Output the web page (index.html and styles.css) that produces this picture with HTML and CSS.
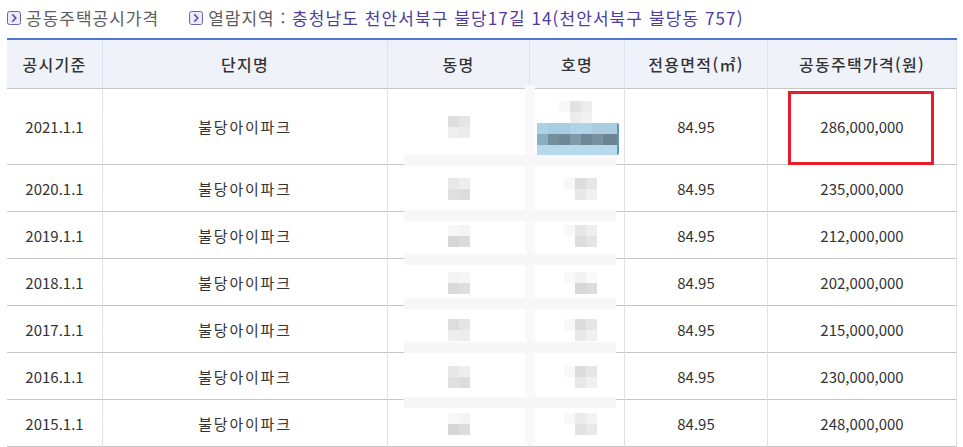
FILE: index.html
```html
<!DOCTYPE html>
<html lang="ko">
<head>
<meta charset="utf-8">
<link rel="stylesheet" href="styles.css">
</head>
<body>
<div class="title">
  <span class="item">
    <svg class="ico" width="14" height="14" viewBox="0 0 14 14"><rect x="0.5" y="0.5" width="13" height="13" rx="2" fill="#ecebf7" stroke="#6a64ad"/><path d="M5.3 3.4 L8.8 7 L5.3 10.6" fill="none" stroke="#5b53a6" stroke-width="1.6"/></svg>
    <span class="gray">공동주택공시가격</span>
  </span>
  <span class="item second">
    <svg class="ico" width="14" height="14" viewBox="0 0 14 14"><rect x="0.5" y="0.5" width="13" height="13" rx="2" fill="#ecebf7" stroke="#6a64ad"/><path d="M5.3 3.4 L8.8 7 L5.3 10.6" fill="none" stroke="#5b53a6" stroke-width="1.6"/></svg>
    <span class="line"><span class="gray">열람지역 : </span><span class="addr">충청남도 천안서북구 불당17길 14(천안서북구 불당동 757)</span></span>
  </span>
</div>
<div class="wrap">
  <table class="grid">
    <colgroup>
      <col class="c1"><col class="c2"><col class="c3"><col class="c4"><col class="c5"><col class="c6">
    </colgroup>
    <thead>
      <tr><th>공시기준</th><th>단지명</th><th>동명</th><th>호명</th><th>전용면적(㎡)</th><th>공동주택가격(원)</th></tr>
    </thead>
    <tbody>
      <tr class="first">
        <td>2021.1.1</td><td class="ko">불당아이파크</td>
        <td><span class="mos m1"><i></i><i></i><i></i><i></i></span></td>
        <td class="hocell">
          <div class="hostack">
            <span class="mos3 h0"><i></i><i></i><i></i><i></i><i></i><i></i></span>
            <div class="bluebar"><div class="bl1"></div><div class="bl2"></div><div class="bl3"></div></div>
          </div>
        </td>
        <td>84.95</td>
        <td class="price"><span class="redbox"></span>286,000,000</td>
      </tr>
      <tr><td>2020.1.1</td><td class="ko">불당아이파크</td><td><span class="mos m2"><i></i><i></i><i></i><i></i></span></td><td><span class="mos3 h1"><i></i><i></i><i></i><i></i><i></i><i></i></span></td><td>84.95</td><td>235,000,000</td></tr>
      <tr><td>2019.1.1</td><td class="ko">불당아이파크</td><td><span class="mos m3"><i></i><i></i><i></i><i></i></span></td><td><span class="mos3 h2"><i></i><i></i><i></i><i></i><i></i><i></i></span></td><td>84.95</td><td>212,000,000</td></tr>
      <tr><td>2018.1.1</td><td class="ko">불당아이파크</td><td><span class="mos m4"><i></i><i></i><i></i><i></i></span></td><td><span class="mos3 h3"><i></i><i></i><i></i><i></i><i></i><i></i></span></td><td>84.95</td><td>202,000,000</td></tr>
      <tr><td>2017.1.1</td><td class="ko">불당아이파크</td><td><span class="mos m1"><i></i><i></i><i></i><i></i></span></td><td><span class="mos3 h1"><i></i><i></i><i></i><i></i><i></i><i></i></span></td><td>84.95</td><td>215,000,000</td></tr>
      <tr><td>2016.1.1</td><td class="ko">불당아이파크</td><td><span class="mos m2"><i></i><i></i><i></i><i></i></span></td><td><span class="mos3 h1"><i></i><i></i><i></i><i></i><i></i><i></i></span></td><td>84.95</td><td>230,000,000</td></tr>
      <tr><td>2015.1.1</td><td class="ko">불당아이파크</td><td><span class="mos m3"><i></i><i></i><i></i><i></i></span></td><td><span class="mos3 h4"><i></i><i></i><i></i><i></i><i></i><i></i></span></td><td>84.95</td><td>248,000,000</td></tr>
    </tbody>
  </table>
  <div class="wash">
    <div class="band b1"></div><div class="band b2"></div><div class="band b3"></div><div class="band b4"></div><div class="band b5"></div><div class="band b6"></div>
    <div class="vband"></div>
  </div>
</div>
</body>
</html>
```

FILE: styles.css
```css
* { box-sizing: border-box; }
html, body { margin: 0; padding: 0; background: #fff; }
body {
  padding: 0 6px 0 7px;
  font-family: "Noto Sans CJK KR", "Noto Sans", sans-serif;
  color: #333;
}
.title {
  height: 38px;
  display: flex;
  align-items: center;
  font-size: 17px;
  padding-bottom: 4px;
}
.item { display: flex; align-items: center; white-space: nowrap; }
.second { margin-left: 30px; }
.ico { flex: none; margin-right: 5px; margin-top: 1px; }
.line { white-space: pre; }
.gray { color: #5d5d5d; letter-spacing: 1px; }
.addr { color: #4e3c9e; letter-spacing: 1.1px; }

.wrap { position: relative; width: 950px; }
.grid {
  width: 950px;
  table-layout: fixed;
  border-collapse: separate;
  border-spacing: 0;
  border-top: 2px solid #4a77d2;
}
.c1 { width: 95px; } .c2 { width: 285px; } .c3 { width: 142px; }
.c4 { width: 95px; } .c5 { width: 143px; } .c6 { width: 190px; }

th, td {
  padding: 0;
  text-align: center;
  vertical-align: middle;
  border-bottom: 1px solid #c6c6c6;
  border-left: 1px solid #dde3eb;
}
th:first-child, td:first-child { border-left: none; }
th:last-child, td:last-child { border-right: 1px solid #dde3eb; }
th {
  height: 49px;
  background: #eff3f9;
  font-size: 16px;
  font-weight: 500;
  color: #333;
  letter-spacing: 1.3px;
}
td {
  height: 47px;
  font-size: 15px;
  color: #333;
  position: relative;
}
td.ko { letter-spacing: 1.8px; }
tr.first td { height: 76px; }

.mos, .mos3 { position: relative; z-index: 2; display: inline-grid; vertical-align: middle; }
.mos { grid-template-columns: 11px 11px; grid-auto-rows: 11px; margin-left: 0; }
.mos3 { grid-template-columns: 11px 11px 11px; grid-auto-rows: 11px; margin-left: 6px; }
.mos i, .mos3 i { display: block; }
.m1 i:nth-child(1) { background: #dddddd; } .m1 i:nth-child(2) { background: #e5e5e5; }
.m1 i:nth-child(3) { background: #eeeeee; } .m1 i:nth-child(4) { background: #ececec; }
.m2 i:nth-child(1) { background: #e8e8e8; } .m2 i:nth-child(2) { background: #eeeeee; }
.m2 i:nth-child(3) { background: #e0e0e0; } .m2 i:nth-child(4) { background: #dcdcdc; }
.m3 i:nth-child(1) { background: #f8f8f8; } .m3 i:nth-child(2) { background: #f4f4f4; }
.m3 i:nth-child(3) { background: #d6d6d6; } .m3 i:nth-child(4) { background: #dcdcdc; }
.m4 i:nth-child(1) { background: #f4f4f4; } .m4 i:nth-child(2) { background: #f6f6f6; }
.m4 i:nth-child(3) { background: #dadada; } .m4 i:nth-child(4) { background: #dedede; }

.h1 i:nth-child(1) { background: #f8f8f8; } .h1 i:nth-child(2) { background: #dcdcdc; } .h1 i:nth-child(3) { background: #e6e6e6; }
.h1 i:nth-child(4) { background: #fff; } .h1 i:nth-child(5) { background: #e8e8e8; } .h1 i:nth-child(6) { background: #f0f0f0; }
.h2 i:nth-child(1) { background: #f8f8f8; } .h2 i:nth-child(2) { background: #e6e6e6; } .h2 i:nth-child(3) { background: #eeeeee; }
.h2 i:nth-child(4) { background: #fff; } .h2 i:nth-child(5) { background: #dcdcdc; } .h2 i:nth-child(6) { background: #e4e4e4; }
.h3 i:nth-child(1) { background: #f8f8f8; } .h3 i:nth-child(2) { background: #f2f2f2; } .h3 i:nth-child(3) { background: #fafafa; }
.h3 i:nth-child(4) { background: #fff; } .h3 i:nth-child(5) { background: #d8d8d8; } .h3 i:nth-child(6) { background: #dcdcdc; }
.h4 i:nth-child(1) { background: #f8f8f8; } .h4 i:nth-child(2) { background: #ebebeb; } .h4 i:nth-child(3) { background: #f2f2f2; }
.h4 i:nth-child(4) { background: #fff; } .h4 i:nth-child(5) { background: #e2e2e2; } .h4 i:nth-child(6) { background: #e8e8e8; }
.h0 i:nth-child(1) { background: #f8f8f8; } .h0 i:nth-child(2) { background: #e2e2e2; } .h0 i:nth-child(3) { background: #ececec; }
.h0 i:nth-child(4) { background: #fff; } .h0 i:nth-child(5) { background: #ececec; } .h0 i:nth-child(6) { background: #f1f1f1; }

.hocell { vertical-align: top; }
.hostack {
  position: relative;
  z-index: 2;
  display: flex;
  flex-direction: column;
  align-items: flex-start;
  padding-top: 12px;
}
.hostack .mos3 { margin-left: 29px; }
.bluebar {
  width: 82px;
  margin-left: 7px;
  border-right: 2px solid #5b97c0;
  border-radius: 0 2px 2px 0;
  background: #b4d8ea;
}
.bl1 { height: 11px; background: linear-gradient(to right, #acd2e7 0 11px, #a7cde2 11px 33px, #b0d3e6 33px 55px, #aaccdf 55px); }
.bl2 { height: 11px; background: linear-gradient(to right, #8aaebf 0 11px, #758e9c 11px 22px, #6f8897 22px 33px, #8199a8 33px 44px, #6e8796 44px 55px, #7a92a0 55px 66px, #6c8492 66px); }
.bl3 { height: 10px; background: #b6d9eb; }

.price { position: relative; }
.redbox {
  position: absolute;
  left: 20px;
  top: 2px;
  width: 146px;
  height: 74px;
  border: 3px solid #e61e2b;
}

.wash {
  position: absolute;
  left: 397px;
  top: 117px;
  width: 212px;
  height: 290px;
  background: #fff;
  z-index: 1;
}
.band { position: absolute; left: 0; right: 0; height: 11px; background: #f7f7f7; }
.b1 { top: 0; } .b2 { top: 55px; } .b3 { top: 99px; } .b4 { top: 143px; } .b5 { top: 187px; } .b6 { top: 242px; }
.vband { position: absolute; left: 121px; width: 10px; top: -70px; bottom: 0; background: #f9f9f9; z-index: -1; }
```
